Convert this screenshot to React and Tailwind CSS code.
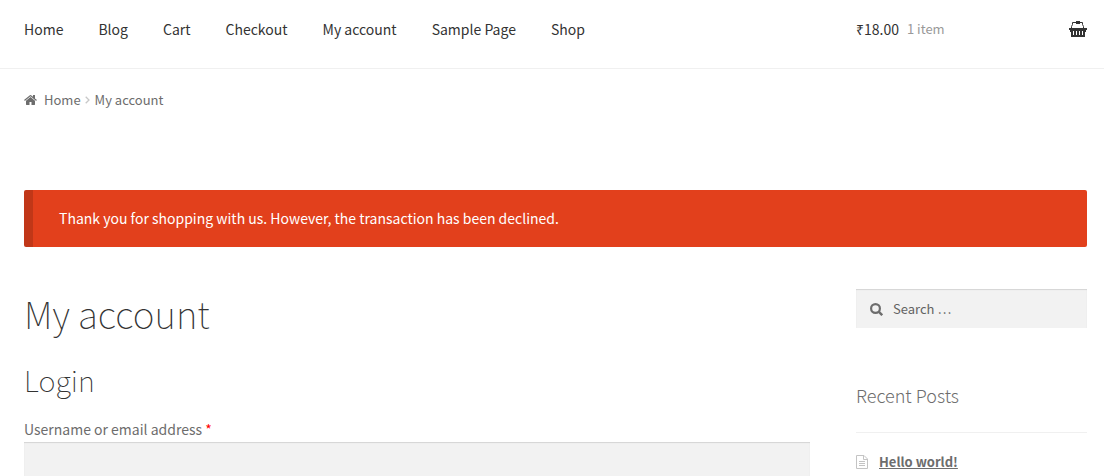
const links = ["Home", "Blog", "Cart", "Checkout", "My account", "Sample Page", "Shop"];

function Basket() {
  return (
    <svg viewBox="0 0 18 16" className="h-4 w-[18px]" fill="none" stroke="currentColor" aria-hidden="true">
      <path d="M2.5 7.5V5.5L3.5 3.5V1.5H13.5V3.5L14.5 5.5V7.5" />
      <path d="M7 0h4v3H7zM0 7h18v2H0zM1 9h16v2h-1v5H2v-5H1z" fill="currentColor" stroke="none" />
      <path d="M4.5 10v4M7.5 10v4M10.5 10v4M13.5 10v4" stroke="#fff" />
    </svg>
  );
}

function HomeIcon() {
  return (
    <svg viewBox="26 253 1612 1283" className="mr-[7px] h-[10px] w-[13px]" fill="currentColor" aria-hidden="true">
      <path d="M1408 992v480q0 26-19 45t-45 19h-384v-384h-256v384h-384q-26 0-45-19t-19-45v-480q0-1 .5-3t.5-3l575-474 575 474q1 2 1 6zm223-69l-62 74q-8 9-21 11h-3q-13 0-21-7l-692-577-692 577q-12 8-24 7-13-2-21-11l-62-74q-8-10-7-23.5t11-21.5l719-599q32-26 76-26t76 26l244 204v-195q0-14 9-23t23-9h192q14 0 23 9t9 23v408l219 182q10 8 11 21.5t-7 23.5z" />
    </svg>
  );
}

function Chevron() {
  return (
    <svg viewBox="0 0 5 8" className="mr-[5px] ml-1 h-2 w-[5px] text-[#c8c8c8]" fill="none" stroke="currentColor" aria-hidden="true">
      <path d="M.7 .7 4 4 .7 7.3" strokeWidth="1.3" />
    </svg>
  );
}

function SearchIcon() {
  return (
    <svg viewBox="0 0 13 13" className="mt-[2px] size-[13px] shrink-0" fill="none" stroke="currentColor" strokeWidth="2.2" aria-hidden="true">
      <circle cx="5.5" cy="5.5" r="4.4" />
      <path d="M8.7 8.7 12.2 12.2" strokeWidth="2.4" />
    </svg>
  );
}

function FileIcon() {
  return (
    <svg viewBox="0 0 12 14" className="mr-[11px] h-[14px] w-3 text-[#c4c4c4]" fill="none" stroke="currentColor" aria-hidden="true">
      <path d="M.5 .5H8L11.5 4V13.5H.5zM7.5 .5V4.5H11.5M3 6.5H9M3 8.5H9M3 10.5H9" />
    </svg>
  );
}

export default function App() {
  return (
    <div className="overflow-x-hidden bg-white font-['Noto_Sans_CJK_SC',sans-serif] text-sm leading-6 text-[#6d6d6d]">
      <header className="flex h-[69px] items-start border-b border-[#f0f0f0] pt-[17px] pr-[17px] pl-6 text-[#333]">
        <nav className="flex flex-1 gap-[35px]">
          {links.map((t) => (
            <a key={t} href="#" className="whitespace-nowrap">{t}</a>
          ))}
        </nav>
        <a href="#" aria-label="Cart contents" className="flex w-[231px] items-center">
          <span>₹18.00</span>
          <span className="ml-2 flex-1 text-[13px] text-[#999]">1 item</span>
          <Basket />
        </a>
      </header>

      <div className="pr-[17px] pl-6">
        <nav aria-label="Breadcrumb" className="flex items-center pt-[19px] text-[13px] leading-6">
          <HomeIcon />
          <a href="#">Home</a>
          <Chevron />
          <span>My account</span>
        </nav>

        <div role="alert" className="mt-[78px] rounded-xs border-l-9 border-[#c13718] bg-[#e2401c] py-4 pr-6 pl-[26px] leading-[25px] text-white">
          Thank you for shopping with us. However, the transaction has been declined.
        </div>

        <div className="mt-[42px] flex">
          <main className="min-w-0 flex-1">
            <h1 className="text-[37px] leading-[48px] font-thin text-[#333]">My account</h1>
            <h2 className="mt-[18px] text-[29px] leading-[48px] font-thin text-[#333]">Login</h2>
            <form>
              <label htmlFor="username" className="mt-[14px] block pb-px">
                Username or email address <span className="text-[#f00]">*</span>
              </label>
              <input
                id="username"
                type="text"
                className="block h-[42px] w-full bg-[#f2f2f2] px-3 shadow-[inset_0_1px_1px_rgba(0,0,0,0.125)] outline-none"
              />
            </form>
          </main>

          <aside className="ml-[46px] w-[231px] text-[13px]">
            <form role="search" className="flex h-[39px] items-center bg-[#f2f2f2] pl-[14px] shadow-[inset_0_1px_1px_rgba(0,0,0,0.125)]">
              <SearchIcon />
              <input
                type="search"
                aria-label="Search"
                placeholder="Search …"
                className="ml-[10px] min-w-0 flex-1 bg-transparent outline-none placeholder:text-[#636363]"
              />
            </form>
            <h3 className="mt-[55px] border-b border-[#f0f0f0] pb-[25px] text-lg leading-6 font-light">Recent Posts</h3>
            <ul className="mt-[17px]">
              <li className="flex items-center">
                <FileIcon />
                <a href="#" className="font-bold underline">Hello world!</a>
              </li>
            </ul>
          </aside>
        </div>
      </div>
    </div>
  );
}
